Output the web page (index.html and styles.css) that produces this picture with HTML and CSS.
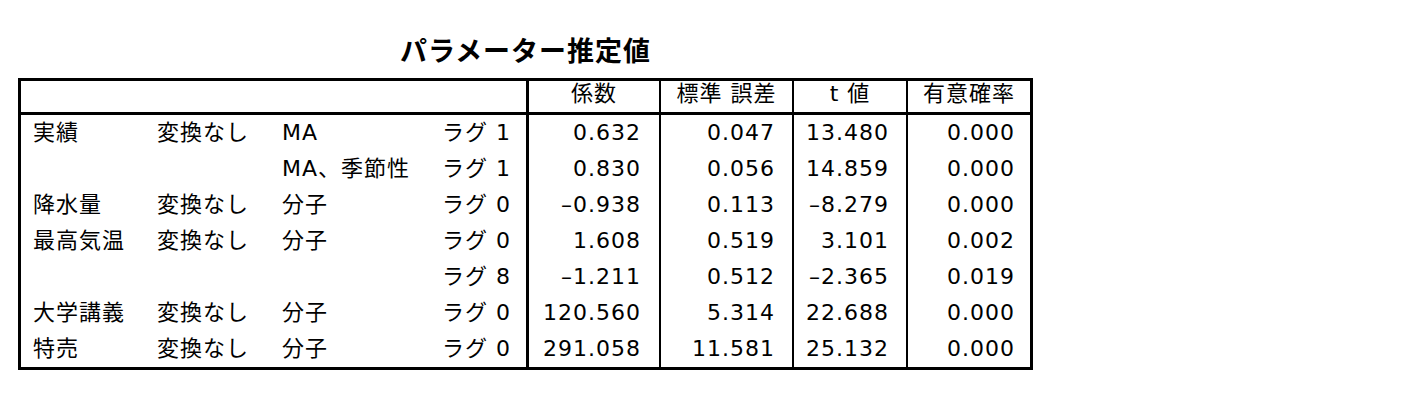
FILE: index.html
```html
<!DOCTYPE html>
<html lang="ja">
<head>
<meta charset="utf-8">
<title>パラメーター推定値</title>
<link rel="stylesheet" href="styles.css">
</head>
<body>
<div class="wrap">
  <div class="title">パラメーター推定値</div>
  <table class="params">
    <colgroup>
      <col class="c1"><col class="c2"><col class="c3"><col class="c4">
      <col class="n1"><col class="n2"><col class="n3"><col class="n4">
    </colgroup>
    <thead>
      <tr>
        <th colspan="4" class="blank"></th>
        <th class="first">係数</th>
        <th>標準 誤差</th>
        <th>t 値</th>
        <th>有意確率</th>
      </tr>
    </thead>
    <tbody>
      <tr><td class="lab">実績</td><td class="lab">変換なし</td><td class="lab">MA</td><td class="lag">ラグ 1</td><td class="num first">0.632</td><td class="num">0.047</td><td class="num">13.480</td><td class="num">0.000</td></tr>
      <tr><td class="lab"></td><td class="lab"></td><td class="lab">MA、季節性</td><td class="lag">ラグ 1</td><td class="num first">0.830</td><td class="num">0.056</td><td class="num">14.859</td><td class="num">0.000</td></tr>
      <tr><td class="lab">降水量</td><td class="lab">変換なし</td><td class="lab">分子</td><td class="lag">ラグ 0</td><td class="num first">–0.938</td><td class="num">0.113</td><td class="num">–8.279</td><td class="num">0.000</td></tr>
      <tr><td class="lab">最高気温</td><td class="lab">変換なし</td><td class="lab">分子</td><td class="lag">ラグ 0</td><td class="num first">1.608</td><td class="num">0.519</td><td class="num">3.101</td><td class="num">0.002</td></tr>
      <tr><td class="lab"></td><td class="lab"></td><td class="lab"></td><td class="lag">ラグ 8</td><td class="num first">–1.211</td><td class="num">0.512</td><td class="num">–2.365</td><td class="num">0.019</td></tr>
      <tr><td class="lab">大学講義</td><td class="lab">変換なし</td><td class="lab">分子</td><td class="lag">ラグ 0</td><td class="num first">120.560</td><td class="num">5.314</td><td class="num">22.688</td><td class="num">0.000</td></tr>
      <tr><td class="lab">特売</td><td class="lab">変換なし</td><td class="lab">分子</td><td class="lag">ラグ 0</td><td class="num first">291.058</td><td class="num">11.581</td><td class="num">25.132</td><td class="num">0.000</td></tr>
    </tbody>
  </table>
</div>
</body>
</html>
```
FILE: styles.css
```css
html, body {
  margin: 0;
  padding: 0;
  background: #ffffff;
}

.wrap {
  padding: 33px 0 0 18px;
  width: 1015px;
  font-family: "DejaVu Sans", "Noto Sans CJK JP", sans-serif;
  color: #000;
}

.title {
  width: 1015px;
  text-align: center;
  font-family: "Noto Sans CJK JP", sans-serif;
  font-weight: bold;
  font-size: 27px;
  letter-spacing: 1px;
  line-height: 34px;
  margin-bottom: 11px;
}

.params {
  table-layout: fixed;
  width: 1015px;
  border-collapse: separate;
  border-spacing: 0;
  border: 3px solid #000;
  font-size: 22px;
  letter-spacing: 1px;
}

.c1 { width: 124px; }
.c2 { width: 125px; }
.c3 { width: 150px; }
.c4 { width: 106px; }
.n1 { width: 133px; }
.n2 { width: 133px; }
.n3 { width: 114px; }
.n4 { width: 124px; }

.params th {
  font-weight: normal;
  font-family: "DejaVu Sans", "Noto Sans CJK JP", sans-serif;
  height: 31px;
  line-height: 26px;
  padding: 0 0 5px 0;
  border-bottom: 3px solid #000;
  border-left: 2px solid #000;
  text-align: center;
  white-space: nowrap;
  box-sizing: border-box;
}

.params th.blank {
  border-left: none;
}

.params th.first,
.params td.first {
  border-left: 3px solid #000;
}

.params td {
  height: 36px;
  line-height: 36px;
  padding: 0;
  white-space: nowrap;
  font-family: "DejaVu Sans", "Noto Sans CJK JP", sans-serif;
  font-size: 22px;
  vertical-align: middle;
  box-sizing: border-box;
}

.params td.lab {
  padding-left: 12px;
}

.params td.lag {
  text-align: right;
  padding-right: 15px;
}

.params td.num {
  text-align: right;
  border-left: 2px solid #000;
  padding-right: 17px;
}

.params td.num.first {
  border-left: 3px solid #000;
  padding-right: 18px;
}

.params tr td:last-child {
  padding-right: 15px;
}
```
